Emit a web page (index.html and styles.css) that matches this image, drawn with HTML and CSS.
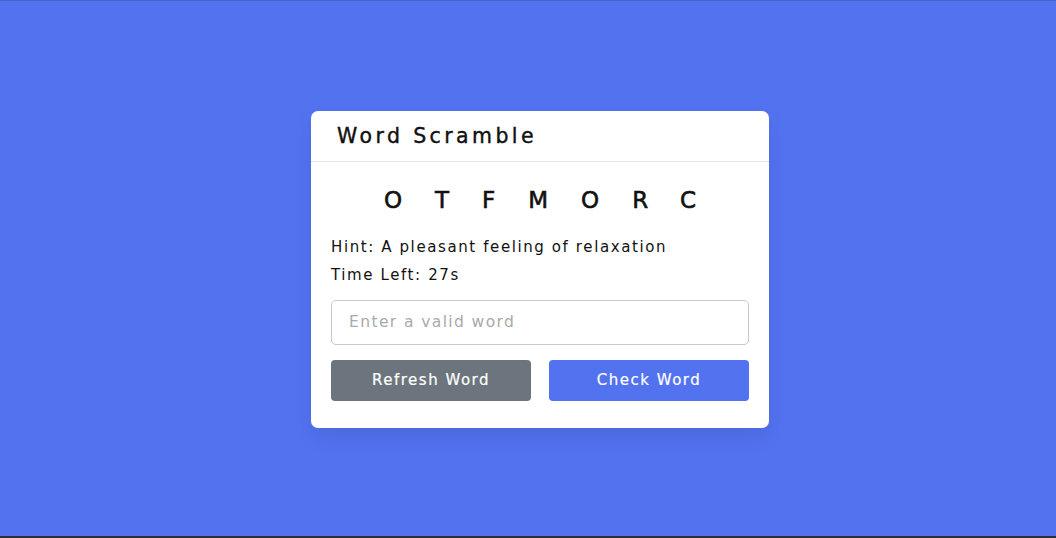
FILE: index.html
```html
<!DOCTYPE html>
<html lang="en">
<head>
<meta charset="utf-8">
<title>Word Scramble</title>
<link rel="stylesheet" href="styles.css">
</head>
<body>
<div class="page">
  <div class="container">
    <h2 class="title">Word Scramble</h2>
    <div class="content">
      <p class="word">OTFMORC</p>
      <div class="details">
        <p>Hint: <span>A pleasant feeling of relaxation</span></p>
        <p>Time Left: <span><b>27</b>s</span></p>
      </div>
      <input type="text" class="guess" placeholder="Enter a valid word" spellcheck="false">
      <div class="buttons">
        <button class="refresh">Refresh Word</button>
        <button class="check">Check Word</button>
      </div>
    </div>
  </div>
</div>
</body>
</html>
```
FILE: styles.css
```css
* { margin: 0; padding: 0; box-sizing: border-box; }
html, body { height: 100%; }
body {
  font-family: "DejaVu Sans", "Liberation Sans", sans-serif;
  background: #5372F0;
  border-top: 1px solid #4a63c8;
  border-bottom: 2px solid #2b2d3a;
}
.page {
  height: 100%;
  display: flex;
  align-items: center;
  justify-content: center;
  padding-left: 24px;
  padding-top: 1px;
}
.container {
  width: 458px;
  background: #fff;
  border-radius: 7px;
  box-shadow: 0 10px 20px rgba(0,0,0,0.08);
}
.title {
  font-size: 20.5px;
  font-weight: 400;
  letter-spacing: 3.4px;
  -webkit-text-stroke: 0.4px #111;
  color: #111;
  padding: 12px 26px 12px;
  line-height: 26px;
  border-bottom: 1px solid #e6e6e6;
}
.content {
  padding: 16px 20px 27px;
}
.word {
  font-size: 23px;
  font-weight: 400;
  -webkit-text-stroke: 0.6px #111;
  text-align: center;
  text-transform: uppercase;
  letter-spacing: 33px;
  margin-right: -33px;
  line-height: 44px;
  color: #111;
}
.details {
  margin: 11px 0 11px;
}
.details p {
  font-size: 15px;
  letter-spacing: 1.6px;
  line-height: 28px;
  color: #111;
}
.details b { font-weight: 400; }
.guess {
  width: 100%;
  height: 45px;
  border: 1px solid #c8c8c8;
  border-radius: 5px;
  padding: 0 17px;
  font-family: inherit;
  font-size: 15.5px;
  letter-spacing: 1.4px;
  outline: none;
  color: #111;
}
.guess::placeholder { color: #aaa; }
.buttons {
  display: flex;
  justify-content: space-between;
  margin-top: 15px;
}
.buttons button {
  width: 200px;
  height: 41px;
  border: none;
  border-radius: 4px;
  color: #fff;
  font-family: inherit;
  font-size: 15px;
  letter-spacing: 1.5px;
  -webkit-text-stroke: 0.2px #fff;
  cursor: pointer;
}
.refresh { background: #6C757D; }
.check { background: #5372F0; }
```
